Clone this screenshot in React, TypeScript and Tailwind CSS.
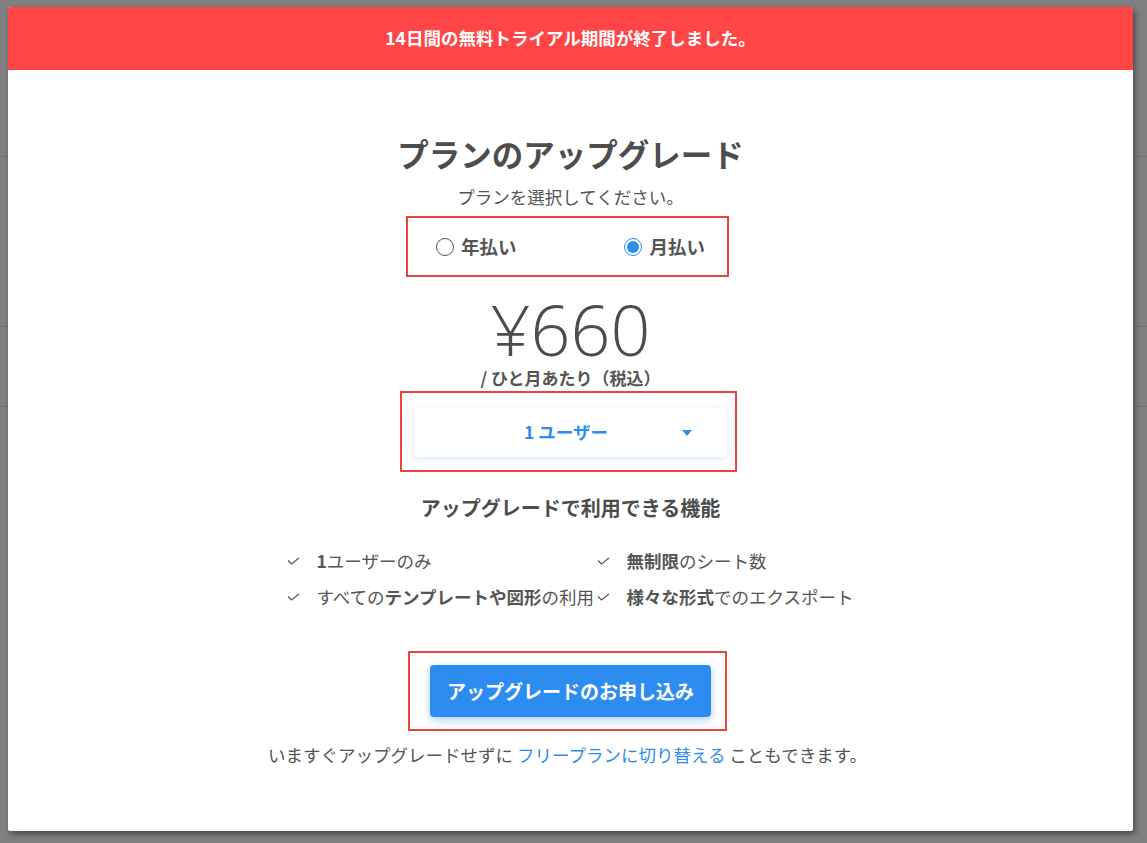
import { useState } from 'react';

const jp = "font-['Noto_Sans_CJK_JP','Noto_Sans',sans-serif]";

function Check() {
  return (
    <svg width="13" height="8" viewBox="0 0 13 8" className="shrink-0">
      <polyline points="1,3.5 4.5,7 12,1" fill="none" stroke="#555" strokeWidth="1.2" />
    </svg>
  );
}

function Radio({ checked }: { checked: boolean }) {
  return (
    <span
      className={
        checked
          ? 'flex items-center justify-center w-[18px] h-[18px] rounded-full border border-[#2d8cf0] bg-white'
          : 'flex items-center justify-center w-[18px] h-[18px] rounded-full border border-[#555] bg-white'
      }
    >
      {checked && <span className="w-[12px] h-[12px] rounded-full bg-[#2d8cf0]" />}
    </span>
  );
}

export default function App() {
  const [plan, setPlan] = useState<'year' | 'month'>('month');

  const features = [
    { pre: '', bold: '1', post: 'ユーザーのみ' },
    { pre: '', bold: '無制限', post: 'のシート数' },
    { pre: 'すべての', bold: 'テンプレートや図形', post: 'の利用' },
    { pre: '', bold: '様々な形式', post: 'でのエクスポート' }
  ];

  return (
    <div className={`relative w-[1147px] h-[843px] overflow-hidden bg-[#808080] ${jp}`}>
      {/* dimmed page behind the modal */}
      <div className="h-[157px] border-b border-[#747474]" />
      <div className="h-[170px] border-b border-[#747474]" />
      <div className="h-[80px] border-b border-[#747474]" />

      <div className="absolute left-[8px] top-[7px] w-[1125px] h-[824px] bg-white rounded-[2px] shadow-[2px_3px_6px_rgba(0,0,0,0.45)] flex flex-col items-center">
        <div className="w-full h-[63px] bg-[#ff4545] flex items-center justify-center text-white font-bold text-[17.5px] rounded-t-[2px]">
          14日間の無料トライアル期間が終了しました。
        </div>

        <h1 className="mt-[61px] h-[44px] leading-[44px] text-[31.5px] font-bold text-[#4d4d4d]">
          プランのアップグレード
        </h1>
        <p className="mt-[9px] h-[26px] leading-[26px] text-[17.5px] text-[#555]">プランを選択してください。</p>

        <div className="mt-[6px] w-[323px] h-[61px] border-2 border-[#e8453c] flex items-center justify-between pl-[28px] pr-[22px] -translate-x-[3px]">
          <label className="flex items-center gap-[7px] cursor-pointer" onClick={() => setPlan('year')}>
            <Radio checked={plan === 'year'} />
            <span className="text-[18.5px] font-bold text-[#555]">年払い</span>
          </label>
          <label className="flex items-center gap-[7px] cursor-pointer" onClick={() => setPlan('month')}>
            <Radio checked={plan === 'month'} />
            <span className="text-[18.5px] font-bold text-[#555]">月払い</span>
          </label>
        </div>

        <div className="mt-[16px] h-[72px] leading-[72px] text-[70px] font-light text-[#4d4d4d] font-['Open_Sans',sans-serif]">
          ¥660
        </div>
        <p className="mt-[1px] h-[24px] leading-[24px] text-[17px] font-bold text-[#555]">/ ひと月あたり（税込）</p>

        <div className="mt-[1px] w-[337px] h-[81px] border-2 border-[#e8453c] pl-[12px] pr-[8px] pt-[15px] -translate-x-[2px]">
          <div className="h-[49px] rounded-[4px] bg-white shadow-[0_1px_6px_rgba(45,140,240,0.22)] flex items-center pl-[110px] pr-[35px]">
            <span className="flex-1 text-[17.5px] font-bold text-[#2d8cf0]">1 ユーザー</span>
            <svg width="10" height="6" viewBox="0 0 10 6">
              <polygon points="0,0 10,0 5,6" fill="#2d8cf0" />
            </svg>
          </div>
        </div>

        <h2 className="mt-[22px] h-[28px] leading-[28px] text-[20px] font-bold text-[#4d4d4d]">
          アップグレードで利用できる機能
        </h2>

        <div className="mt-[21px] w-[564px] grid grid-cols-[310px_1fr] -translate-x-[2px]">
          {features.map((f, i) => (
            <div key={i} className="h-[36px] flex items-center gap-[17px] whitespace-nowrap text-[17.5px] text-[#555]">
              <Check />
              <span>
                {f.pre}
                <b className="font-bold">{f.bold}</b>
                {f.post}
              </span>
            </div>
          ))}
        </div>

        <div className="mt-[36px] w-[319px] h-[80px] border-2 border-[#e8453c] pl-[20px] pr-[14px] pt-[12px] -translate-x-[3px]">
          <button className="w-full h-[52px] rounded-[4px] bg-[#2d8cf0] text-white text-[19px] font-bold shadow-[0_3px_8px_rgba(45,140,240,0.4)]">
            アップグレードのお申し込み
          </button>
        </div>

        <p className="mt-[11px] h-[26px] leading-[26px] text-[17.5px] text-[#555] -translate-x-[3px]">
          いますぐアップグレードせずに <a className="text-[#2d8cf0] cursor-pointer">フリープランに切り替える</a> こともできます。
        </p>
      </div>
    </div>
  );
}
